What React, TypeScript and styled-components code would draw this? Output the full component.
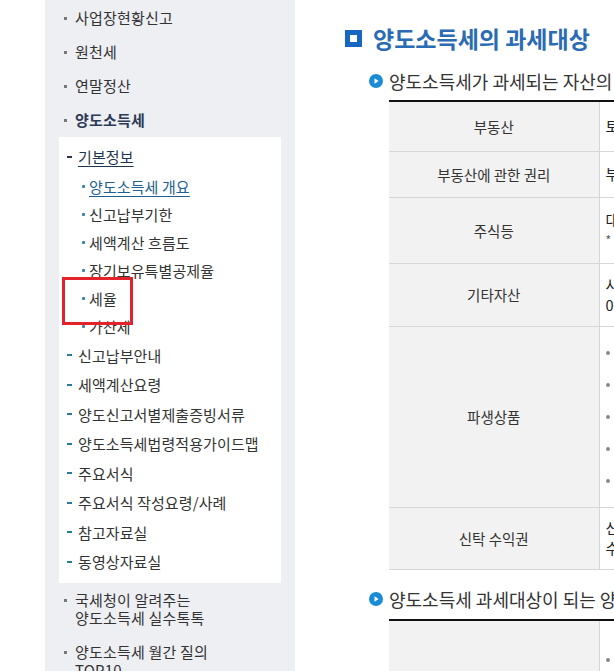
import styled, { createGlobalStyle } from 'styled-components';

const GlobalStyle = createGlobalStyle`
  html, body {
    margin: 0;
    padding: 0;
    overflow: hidden;
    background: #fff;
  }
  body {
    font-family: "Noto Sans CJK KR", "Noto Sans", sans-serif;
    color: #333;
  }
`;

const Page = styled.div`
  width: 614px;
  height: 671px;
  overflow: hidden;
  display: flex;
  background: #fff;
`;

const Gutter = styled.div`
  width: 45px;
  flex: 0 0 auto;
`;

const Sidebar = styled.nav`
  position: relative;
  width: 250px;
  flex: 0 0 auto;
  background: #edeff3;
  padding: 1px 14px 0;
  box-sizing: border-box;
`;

const TopItem = styled.div<{ $bold?: boolean }>`
  display: flex;
  align-items: flex-start;
  padding: 8px 0 8px 5px;
  font-size: 15px;
  line-height: 18px;
  letter-spacing: 0.2px;
  font-weight: ${(p) => (p.$bold ? 700 : 400)};
  color: ${(p) => (p.$bold ? '#2c3a56' : '#333')};
  white-space: nowrap;
`;

const Square = styled.span`
  width: 3px;
  height: 3px;
  background: #777;
  flex: 0 0 auto;
  margin: 8px 8px 0 0;
`;

const SubPanel = styled.div`
  background: #fff;
  padding: 5px 0 6px 8px;
`;

const Level2 = styled.div<{ $active?: boolean }>`
  height: 29.5px;
  display: flex;
  align-items: center;
  font-size: 15px;
  letter-spacing: 0.1px;
  white-space: nowrap;
  color: ${(p) => (p.$active ? '#1e3552' : '#333')};
  text-decoration: ${(p) => (p.$active ? 'underline' : 'none')};
  text-underline-offset: 3px;
`;

const Dash = styled.span<{ $active?: boolean }>`
  width: 5px;
  height: 2px;
  flex: 0 0 auto;
  margin-right: 6px;
  background: ${(p) => (p.$active ? '#2b3445' : '#2c7a97')};
`;

const Level3List = styled.div`
  margin: 1px 0 0 15px;
`;

const Level3 = styled.div<{ $active?: boolean }>`
  height: 28px;
  display: flex;
  align-items: center;
  font-size: 15px;
  letter-spacing: 0.1px;
  white-space: nowrap;
  color: ${(p) => (p.$active ? '#1d6193' : '#333')};
  text-decoration: ${(p) => (p.$active ? 'underline' : 'none')};
  text-underline-offset: 3px;
`;

const Dot = styled.span`
  width: 3px;
  height: 3px;
  border-radius: 1px;
  background: #3a82b0;
  flex: 0 0 auto;
  margin-right: 4px;
`;

const Annotation = styled.div`
  position: absolute;
  left: 17px;
  top: 277px;
  width: 71px;
  height: 48px;
  border: 3px solid #e3222b;
  box-sizing: border-box;
`;

const Main = styled.main`
  flex: 1;
  min-width: 0;
  padding: 24px 0 0 50px;
  overflow: hidden;
`;

const Heading = styled.h2`
  margin: 0;
  display: flex;
  align-items: center;
  gap: 11px;
  height: 28px;
  font-size: 23px;
  font-weight: 700;
  color: #2a6bb3;
  white-space: nowrap;
`;

const HeadIcon = styled.span`
  position: relative;
  width: 17px;
  height: 17px;
  flex: 0 0 auto;
  background: #1766c2;

  &::after {
    content: '';
    position: absolute;
    left: 5px;
    top: 5px;
    width: 7px;
    height: 7px;
    background: #fff;
  }
`;

const SubHeading = styled.h3<{ $top: number }>`
  margin: ${(p) => p.$top}px 0 0 24px;
  display: flex;
  align-items: center;
  gap: 6px;
  height: 24px;
  font-size: 18px;
  font-weight: 400;
  color: #333;
  white-space: nowrap;
`;

const PlayIcon = styled.svg`
  width: 14px;
  height: 14px;
  flex: 0 0 auto;
`;

const Table = styled.table<{ $top: number }>`
  margin: ${(p) => p.$top}px 0 0 44px;
  width: 560px;
  border-collapse: collapse;
  border-top: 2px solid #111;
  font-size: 14.5px;
  table-layout: fixed;
`;

const Th = styled.th<{ $h: number }>`
  width: 210px;
  height: ${(p) => p.$h}px;
  background: #f2f2f2;
  border-bottom: 1px solid #d6d6d6;
  border-right: 1px solid #d6d6d6;
  font-weight: 400;
  color: #333;
  text-align: center;
  vertical-align: middle;
  padding: 0;
  box-sizing: border-box;
`;

const Td = styled.td`
  border-bottom: 1px solid #d6d6d6;
  padding: 0 0 0 6px;
  color: #222;
  line-height: 20px;
  vertical-align: middle;
  white-space: nowrap;
`;

const Note = styled.div`
  font-size: 12px;
  color: #555;
`;

const BulletList = styled.ul`
  margin: 0;
  padding: 0;
  list-style: none;
`;

const Bullet = styled.li`
  display: flex;
  align-items: center;
  height: 32px;

  &::before {
    content: '';
    width: 4px;
    height: 4px;
    border-radius: 50%;
    background: #888;
    margin-right: 8px;
  }
`;

const topItems = ['사업장현황신고', '원천세', '연말정산'];
const basicInfo = ['양도소득세 개요', '신고납부기한', '세액계산 흐름도', '장기보유특별공제율', '세율', '가산세'];
const level2 = [
  '신고납부안내',
  '세액계산요령',
  '양도신고서별제출증빙서류',
  '양도소득세법령적용가이드맵',
  '주요서식',
  '주요서식 작성요령/사례',
  '참고자료실',
  '동영상자료실',
];

function Play() {
  return (
    <PlayIcon viewBox="0 0 14 14">
      <circle cx="7" cy="7" r="7" fill="#1a8bd6" />
      <path d="M5.5 4.2 L9.6 7 L5.5 9.8 Z" fill="#fff" />
    </PlayIcon>
  );
}

export default function App() {
  return (
    <Page>
      <GlobalStyle />
      <Gutter />
      <Sidebar>
        {topItems.map((t) => (
          <TopItem key={t}>
            <Square />
            {t}
          </TopItem>
        ))}
        <TopItem $bold>
          <Square />
          양도소득세
        </TopItem>
        <SubPanel>
          <Level2 $active>
            <Dash $active />
            기본정보
          </Level2>
          <Level3List>
            {basicInfo.map((t, i) => (
              <Level3 key={t} $active={i === 0}>
                <Dot />
                {t}
              </Level3>
            ))}
          </Level3List>
          {level2.map((t) => (
            <Level2 key={t}>
              <Dash />
              {t}
            </Level2>
          ))}
        </SubPanel>
        <TopItem>
          <Square />
          <span>
            국세청이 알려주는
            <br />
            양도소득세 실수톡톡
          </span>
        </TopItem>
        <TopItem>
          <Square />
          <span>
            양도소득세 월간 질의
            <br />
            TOP10
          </span>
        </TopItem>
        <Annotation />
      </Sidebar>

      <Main>
        <Heading>
          <HeadIcon />
          양도소득세의 과세대상
        </Heading>
        <SubHeading $top={17}>
          <Play />
          양도소득세가 과세되는 자산의 범위
        </SubHeading>
        <Table $top={7}>
          <tbody>
            <tr>
              <Th $h={50}>부동산</Th>
              <Td>토지, 건물(무허가·미등기 건물 포함)</Td>
            </tr>
            <tr>
              <Th $h={46}>부동산에 관한 권리</Th>
              <Td>부동산을 취득할 수 있는 권리, 지상권, 전세권</Td>
            </tr>
            <tr>
              <Th $h={66}>주식등</Th>
              <Td>
                대주주가 양도하는 상장주식, 비상장주식
                <Note>* 주권상장법인의 대주주 범위</Note>
              </Td>
            </tr>
            <tr>
              <Th $h={63}>기타자산</Th>
              <Td>
                사업용 고정자산과 함께 양도하는 영업권
                <br />
                0 특정시설물 이용권·회원권
              </Td>
            </tr>
            <tr>
              <Th $h={181}>파생상품</Th>
              <Td>
                <BulletList>
                  <Bullet>코스피200 선물·옵션</Bullet>
                  <Bullet>미니코스피200 선물·옵션</Bullet>
                  <Bullet>코스닥150 선물·옵션</Bullet>
                  <Bullet>해외 파생상품</Bullet>
                  <Bullet>주가지수 관련 장외파생상품</Bullet>
                </BulletList>
              </Td>
            </tr>
            <tr>
              <Th $h={62}>신탁 수익권</Th>
              <Td>
                신탁의 이익을 받을 권리의 양도
                <br />
                수익증권 및 투자신탁 수익권 제외
              </Td>
            </tr>
          </tbody>
        </Table>
        <SubHeading $top={17}>
          <Play />
          양도소득세 과세대상이 되는 양도의 범위
        </SubHeading>
        <Table $top={8}>
          <tbody>
            <tr>
              <Th $h={80}> </Th>
              <Td>
                <BulletList>
                  <Bullet>매도, 교환, 법인에 대한 현물출자</Bullet>
                </BulletList>
              </Td>
            </tr>
          </tbody>
        </Table>
      </Main>
    </Page>
  );
}
